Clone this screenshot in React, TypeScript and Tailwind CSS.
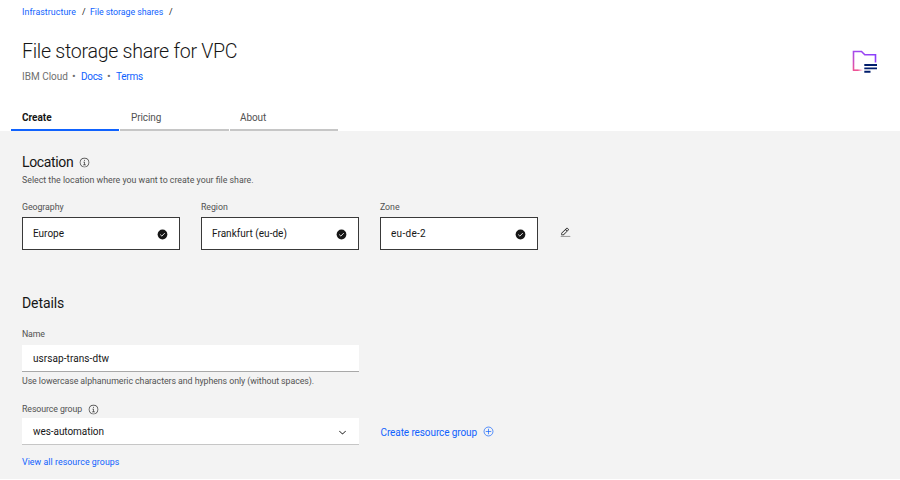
import React from "react";

function InfoIcon() {
  return (
    <svg viewBox="0 0 32 32" className="size-[11px] shrink-0" fill="#393939">
      <path d="M17 22V14H13V16H15V22H12V24H20V22H17ZM16 8a1.5 1.5 0 1 0 1.5 1.5A1.5 1.5 0 0 0 16 8Z" />
      <path d="M16 30A14 14 0 1 1 30 16 14 14 0 0 1 16 30ZM16 4A12 12 0 1 0 28 16 12 12 0 0 0 16 4Z" />
    </svg>
  );
}

function CheckIcon() {
  return (
    <svg viewBox="0 0 32 32" className="mt-px size-[11px] shrink-0">
      <circle cx="16" cy="16" r="14.2" fill="#161616" />
      <path d="M9.5 16.2 14 20.6 22.5 12" fill="none" stroke="#fff" strokeWidth="2.6" />
    </svg>
  );
}

function EditIcon() {
  return (
    <svg viewBox="0 0 32 32" className="size-[11px] shrink-0" fill="#161616">
      <path d="M2 26H30V28H2Z" fillOpacity="0.6" />
      <path d="M25.4 9c.8-.8.8-2 0-2.8l-3.6-3.6c-.8-.8-2-.8-2.8 0l-15 15V24h6.4L25.4 9ZM20.4 4 24 7.6l-3 3L17.4 7l3-3ZM6 22v-3.6l10-10 3.6 3.6-10 10H6Z" />
    </svg>
  );
}

function AddIcon() {
  return (
    <svg viewBox="0 0 32 32" className="size-[11px] shrink-0" fill="none" stroke="#0f62fe" strokeWidth="2">
      <circle cx="16" cy="16" r="13" />
      <path d="M16 8V24M8 16H24" />
    </svg>
  );
}

function ChevronIcon() {
  return (
    <svg viewBox="0 0 32 32" className="mt-px size-[11px] shrink-0" fill="#161616">
      <path d="M16 22 6 12 7.4 10.6 16 19.2 24.6 10.6 26 12Z" />
    </svg>
  );
}

function FolderLogo() {
  return (
    <svg viewBox="0 0 26 24" className="h-[24px] w-[26px]" fill="none">
      <defs>
        <linearGradient id="folder" x1="2" y1="21" x2="20" y2="3" gradientUnits="userSpaceOnUse">
          <stop offset="0" stopColor="#ee5396" />
          <stop offset="0.5" stopColor="#a94be8" />
          <stop offset="1" stopColor="#8a3ffc" />
        </linearGradient>
        <linearGradient id="fade" x1="2" y1="0" x2="11" y2="0" gradientUnits="userSpaceOnUse">
          <stop offset="0" stopColor="#ee5396" />
          <stop offset="0.4" stopColor="#ee5396" />
          <stop offset="1" stopColor="#ee5396" stopOpacity="0" />
        </linearGradient>
      </defs>
      <path d="M1.5 20.8V1.5H9.5L12.8 4.8H23.5V12.5" stroke="url(#folder)" strokeWidth="1.6" />
      <path d="M1 20.2H11" stroke="url(#fade)" strokeWidth="1.6" />
      <path d="M12.3 15H25M12.3 18.4H25M12.3 21.8H18.5" stroke="#001d6c" strokeWidth="1.9" />
    </svg>
  );
}

function LocationCard({ label, value, track }: { label: string; value: string; track: string }) {
  return (
    <div className="w-[158px]">
      <div className="h-[14px] text-[8.8px] leading-[11px] tracking-[-0.06px] text-[#525252]">{label}</div>
      <div className="mt-px flex h-[33px] items-center justify-between border border-[#393939] bg-white pr-[11px] pl-[10px] text-[10px]">
        <span className={track}>{value}</span>
        <CheckIcon />
      </div>
    </div>
  );
}

export default function App() {
  return (
    <div className="h-[480px] w-[900px] overflow-hidden bg-white font-['Roboto','Liberation_Sans',sans-serif] text-[#161616]">
      <header className="flex h-[131px] flex-col justify-between">
        <div className="flex justify-between pr-[22px] pl-[22px]">
          <div>
            <nav className="flex pt-[6px] text-[8.8px] leading-[12px] text-[#0f62fe]">
              <a className="w-[60px] tracking-[0.07px]">Infrastructure</a>
              <span className="w-[8px] text-[#161616]">/</span>
              <a className="w-[79px] tracking-[-0.04px] whitespace-nowrap">File storage shares</a>
              <span className="text-[#161616]">/</span>
            </nav>
            <h1 className="mt-[21px] text-[19.6px] leading-[26px] font-light tracking-[-0.28px] whitespace-nowrap">File storage share for VPC</h1>
            <div className="mt-[5px] flex text-[10px] leading-[14px] text-[#6f6f6f]">
              <span className="w-[50px]">IBM Cloud</span>
              <span className="w-[9px] text-[11px]">•</span>
              <a className="w-[26px] tracking-[-0.3px] text-[#0f62fe]">Docs</a>
              <span className="w-[9px] text-[11px]">•</span>
              <a className="tracking-[-0.25px] text-[#0f62fe]">Terms</a>
            </div>
          </div>
          <div className="pt-[50px]">
            <FolderLogo />
          </div>
        </div>
        <div className="flex gap-px pl-[11px] text-[10px] leading-[15px] text-[#525252]">
          <div className="h-[21px] w-[108px] border-b-2 border-[#0f62fe] pl-[11px] font-bold text-[#161616]">Create</div>
          <div className="h-[21px] w-[109px] border-b-2 border-[#c6c6c6] pl-[11px] tracking-[-0.1px]">Pricing</div>
          <div className="h-[21px] w-[108px] border-b-2 border-[#c6c6c6] pl-[10px] tracking-[-0.1px]">About</div>
        </div>
      </header>
      <main className="h-[348px] bg-[#f3f3f3] pt-[22px] pl-[22px]">
        <section className="h-[141px]">
          <h2 className="flex h-[18px] items-center gap-[6px] text-[14px] leading-[18px]">
            <span className="tracking-[-0.35px]">Location</span>
            <InfoIcon />
          </h2>
          <p className="mt-[3px] h-[28px] text-[8.8px] leading-[12px] text-[#525252]">Select the location where you want to create your file share.</p>
          <div className="flex">
            <div className="w-[179px]">
              <LocationCard label="Geography" value="Europe" track="tracking-[0px]" />
            </div>
            <div className="w-[179px]">
              <LocationCard label="Region" value="Frankfurt (eu-de)" track="tracking-[0.03px]" />
            </div>
            <div className="w-[180px]">
              <LocationCard label="Zone" value="eu-de-2" track="tracking-[0.3px]" />
            </div>
            <div className="pt-[25px]">
              <EditIcon />
            </div>
          </div>
        </section>
        <section className="text-[8.8px] leading-[12px] text-[#525252]">
          <h2 className="text-[14px] leading-[18px] tracking-[-0.1px] text-[#161616]">Details</h2>
          <label className="mt-[16px] block tracking-[-0.2px]">Name</label>
          <div className="mt-[5px] flex h-[27px] w-[337px] items-center border-b border-[#a8a8a8] bg-white pt-px pl-[11px] text-[10px] text-[#161616]">
            <span className="tracking-[0.08px]">usrsap-trans-dtw</span>
          </div>
          <p className="mt-[3px] tracking-[-0.06px]">Use lowercase alphanumeric characters and hyphens only (without spaces).</p>
          <label className="mt-[16px] flex items-center gap-[6px]">
            <span className="tracking-[-0.1px]">Resource group</span>
            <InfoIcon />
          </label>
          <div className="mt-[3px] flex items-center text-[10px]">
            <div className="mr-[21.5px] flex h-[27px] w-[337px] items-center justify-between border-b border-[#c6c6c6] bg-white pt-px pr-[11px] pl-[11px] text-[#161616]">
              <span className="tracking-[-0.06px]">wes-automation</span>
              <ChevronIcon />
            </div>
            <a className="flex items-center gap-[6px] text-[#0f62fe]">
              <span className="pt-[2px] tracking-[-0.1px]">Create resource group</span>
              <AddIcon />
            </a>
          </div>
          <a className="mt-[11px] block tracking-[0.06px] text-[#0f62fe]">View all resource groups</a>
        </section>
      </main>
    </div>
  );
}
